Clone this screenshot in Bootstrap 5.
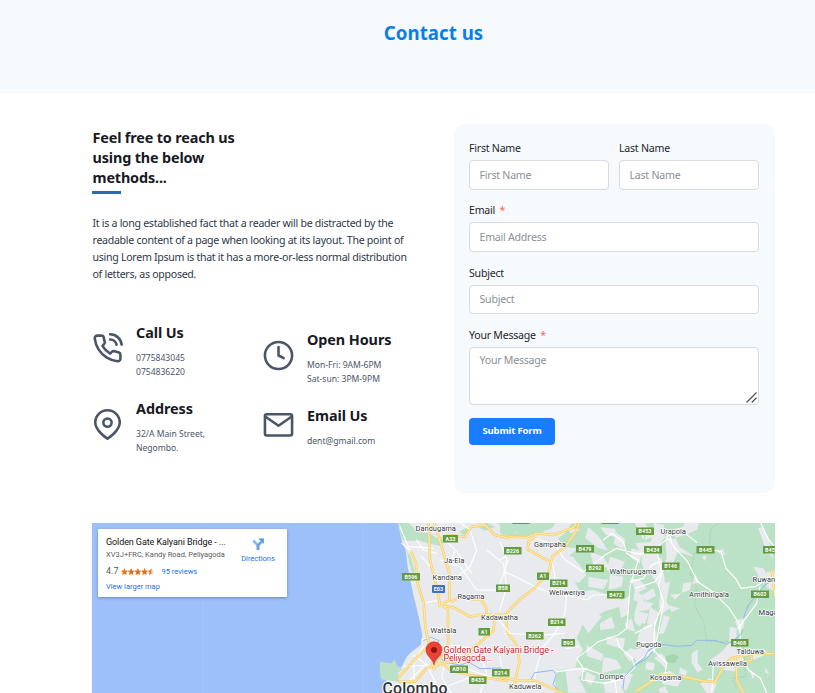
<!DOCTYPE html>
<html lang="en">
<head>
<meta charset="utf-8">
<meta name="viewport" content="width=device-width, initial-scale=1">
<title>Contact us</title>
<link href="https://cdn.jsdelivr.net/npm/bootstrap@5.3.0/dist/css/bootstrap.min.css" rel="stylesheet">
<style>
body{font-family:"Noto Sans","Open Sans",sans-serif;font-size:10.6px;letter-spacing:-.24px;color:#1a202c;overflow:hidden}
.tinted{background:#f7fafd}
.hero{height:94px;padding:20px 40px 0 92px}
.hero h1{font-size:18.7px;line-height:26px;letter-spacing:.02px;color:#087ee8}
.page-area{padding:30px 40px 0 92px}
.info-col{width:342px}
.form-col{width:321px;height:369px;border-radius:10px;padding:16px 16px 0 15px}
h2,h3{font-size:14.4px;font-weight:700;letter-spacing:-.08px;color:#171923}
.lead-title{line-height:20px;width:150px;margin-top:4px;letter-spacing:-.15px;padding-left:.5px}
.accent-line{width:29px;height:3px;background:#2b6cb0;margin-top:3px}
.intro{line-height:17px;width:330px;margin-top:21px;color:#2d3748;letter-spacing:-.285px;padding-left:.5px}
.methods{margin-top:40px}
.method-col{width:171px;flex:none}
.method-col.hours{padding-top:7px}
.method{gap:13px;height:76px}
.method svg{width:31px;height:31px;flex:none;stroke:#4a5568;fill:none;stroke-linecap:round;stroke-linejoin:round;stroke-width:2;margin-top:10px}
.method .mail{margin-top:3px}
.method h3{line-height:20px;margin:0 0 8px}
.method p{font-size:8.6px;line-height:14px;letter-spacing:-.02px;color:#4a5568}
.form-label{line-height:17px;margin-bottom:3px;display:block;color:#212529}
.form-label i{color:#f56565;font-style:normal;margin-left:2px}
.form-control{font:inherit;letter-spacing:inherit;height:29.5px;padding:0 9.5px;border:1px solid #d8dbdf;border-radius:4px}
.form-control::placeholder{color:#8a9097}
.name-row{gap:10px}
.field{margin-bottom:12.8px}
textarea.form-control{height:58px;padding-top:5px;resize:none}
.grip{position:absolute;right:2px;bottom:2px;width:11px;height:11px}
.send{width:86px;height:27px;font-size:9.5px;font-weight:700;letter-spacing:-.16px;background:#1a7dff;border:0;border-radius:4px;color:#fff;padding:0}
.map-box{height:170px;margin-top:30px;overflow:hidden;background:#9cc0f9}
.map-box>svg{display:block}
.place-card{position:absolute;left:6px;top:6px;width:189px;height:68px;background:#fff;border-radius:1px;box-shadow:0 1px 3px rgba(0,0,0,.3);font-family:Roboto,sans-serif;padding:7px 11px 0 8px;letter-spacing:0;font-size:7.5px;color:#5b5b5b}
.place-card a{color:#1a73e8;text-decoration:none}
.place-name{font-size:9px;line-height:12px;color:#111;letter-spacing:-.09px}
.place-addr{line-height:12px;letter-spacing:0;margin-top:1px}
.place-rate{line-height:13px;margin-top:4px}
.place-rate b{font-weight:400;font-size:9px;margin-right:2px}
.place-rate a{margin-left:7px}
.place-more{line-height:12px;margin-top:3px}
.dir{line-height:9px;width:36px;margin-top:2px}
.lbl{font-family:Roboto,sans-serif;font-size:7.6px;fill:#303438;stroke:#fff;stroke-width:1.4px;paint-order:stroke;stroke-linejoin:round;letter-spacing:0}
.shield rect{fill:#649c3f}
.shield text{font:700 5.4px Roboto,sans-serif;fill:#fff;text-anchor:middle;letter-spacing:.1px}
.minor{fill:none;stroke:#fff;stroke-width:3.4;stroke-linejoin:round;stroke-linecap:round}
.edge{fill:none;stroke:#f6c95e;stroke-width:7.5;stroke-linejoin:round}
.core{fill:none;stroke:#ffe9a0;stroke-width:4;stroke-linejoin:round}
.river{fill:none;stroke:#91b8f2;stroke-width:3;stroke-linejoin:round}
.veg{fill:#bbe2c6}
.town{fill:#e8eaed}
</style>
</head>
<body>
<header class="hero tinted text-center"><h1 class="fw-bold mb-0">Contact us</h1></header>
<main class="page-area">
  <div class="d-flex justify-content-between">
    <section class="info-col">
      <h2 class="lead-title mb-0 text-nowrap">Feel free to reach us<br>using the below<br>methods...</h2>
      <div class="accent-line"></div>
      <p class="intro mb-0 text-nowrap">It is a long established fact that a reader will be distracted by the<br>readable content of a page when looking at its layout. The point of<br>using Lorem Ipsum is that it has a more-or-less normal distribution<br>of letters, as opposed.</p>
      <div class="methods d-flex">
        <div class="method-col">
          <div class="method d-flex">
            <svg viewBox="0 0 24 24"><path d="M22 16.92v3a2 2 0 0 1-2.18 2 19.79 19.79 0 0 1-8.63-3.07 19.5 19.5 0 0 1-6-6A19.79 19.79 0 0 1 2.12 4.18 2 2 0 0 1 4.11 2h3a2 2 0 0 1 2 1.72c.13.96.36 1.9.7 2.81a2 2 0 0 1-.45 2.11L8.09 9.91a16 16 0 0 0 6 6l1.27-1.27a2 2 0 0 1 2.11-.45c.91.34 1.85.57 2.81.7A2 2 0 0 1 22 16.92z"/><path d="M14.05 1a9 9 0 0 1 8.9 8M14.05 5A5 5 0 0 1 19 9"/></svg>
            <div><h3>Call Us</h3><p class="mb-0">0775843045<br>0754836220</p></div>
          </div>
          <div class="method d-flex">
            <svg viewBox="0 0 24 24"><path d="M21.500 10.500c0 6.500-9.500 12.500-9.500 12.500s-9.500-6-9.500-12.500a9.500 9.500 0 0 1 19 0z"/><circle cx="12" cy="10.500" r="3.200"/></svg>
            <div><h3>Address</h3><p class="mb-0">32/A Main Street,<br>Negombo.</p></div>
          </div>
        </div>
        <div class="method-col hours">
          <div class="method d-flex">
            <svg viewBox="0 0 24 24"><circle cx="12" cy="12" r="10.500"/><path d="M12 5.500V12l4 2"/></svg>
            <div><h3>Open Hours</h3><p class="mb-0">Mon-Fri: 9AM-6PM<br>Sat-sun: 3PM-9PM</p></div>
          </div>
          <div class="method d-flex">
            <svg class="mail" viewBox="0 0 24 24"><rect x="1.500" y="4" width="21" height="16.500" rx="1.500"/><path d="M22 6l-10 7L2 6"/></svg>
            <div><h3>Email Us</h3><p class="mb-0">dent@gmail.com</p></div>
          </div>
        </div>
      </div>
    </section>
    <form class="form-col tinted">
      <div class="d-flex field name-row">
        <div class="flex-fill"><label class="form-label" for="fn">First Name</label><input class="form-control" id="fn" placeholder="First Name"></div>
        <div class="flex-fill"><label class="form-label" for="ln">Last Name</label><input class="form-control" id="ln" placeholder="Last Name"></div>
      </div>
      <div class="field"><label class="form-label" for="em">Email <i>*</i></label><input class="form-control" id="em" placeholder="Email Address"></div>
      <div class="field"><label class="form-label" for="su">Subject</label><input class="form-control" id="su" placeholder="Subject"></div>
      <div class="field position-relative"><label class="form-label" for="ms">Your Message <i>*</i></label><textarea class="form-control d-block" id="ms" placeholder="Your Message"></textarea>
        <svg class="grip" viewBox="0 0 11 11" stroke="#555" stroke-width="1.300"><path d="M.5 10.500l10-10M5.700 10.500l4.800-4.800"/></svg></div>
      <button class="btn send" type="button">Submit Form</button>
    </form>
  </div>
  <div class="map-box position-relative">
    <svg width="683" height="170" viewBox="92 523 683 170">
      <path d="M203.500 523v170M363.500 523v170" stroke="#a9c7f7" stroke-width=".6"/>
      <g transform="translate(370 520) scale(.33333)">
        <path class="town" d="M82 0L95 62 107 90 113 140 127 210 146 290 157 345 152 375 125 395 110 410 97 437 88 450 60 462 40 500 36 525H1300V0z"/>
        <path class="veg" d="M82 0L96 58 104 62 150 62 175 70 210 78 226 62 222 48 200 55 180 40 140 35 110 0zM110 90L118 130 130 170 133 150 122 110z"/>
        <path class="veg" d="M30 425l35 5 8-12 10 20 15 8-14 14 4 26-55-8-4-25zM270 35l20-14 10 12-18 14zM320 20l30-12 25 12-30 12zM375 0h45v18l-25 4z"/>
        <path class="veg" d="M395 30l50 8 50-20 25 10-5 14-70 10-50-8z"/>
      </g>
      <g transform="translate(500 520) scale(.33333)">
        <path class="veg" d="M0 0h175l-20 25-60 22-50-12L0 40zM238 0h620v525H170l-5-45 10-30 50-5 10-35 15-20-20-35 20-45 30 10 15-35 40-25 5-30-60-20-40 5-20-40-20-40 10-30 25-20-50-5-10-25 20-15 20-30 18 4z"/>
        <path class="town" d="M20 0l50 12 40-14zM200 20l42 10-30 10zM300 22l45 4 5 26-32-8zM265 22l30 25 30 45-30-8-40-30zM160 105l60 5 20 30-20 30-50-10zM205 135l30-5 25 35-25 25-30-20zM270 95l40 15 20 35-50-10zM345 35l30 22-5 30-28-15zM330 110l45 15-20 40-35-15zM265 170l60 10-15 28-45-8zM330 165l40 5-5 30-40 10zM290 225l70 8 10 24-65 20-35-15zM355 245l35-18-5 55-22 12zM240 300l40-30 25 20-40 50zM300 310l35-20 10 35-45 5zM320 350l55 5-5 33-50-15zM375 310l20-15 10 40-25-8zM260 375l50 28-5 20-45-15zM195 440l70 5-30 28 25 45h-55zM260 455l28 15-15 25-20-15zM310 410l40 10 15 25-60 15zM370 400l25-17 20 22-25 20zM365 460l34 3-20 50-30-25zM310 485l40-4 25 40-60-4z"/>
        <path class="town" d="M400 0l35 7 20 42-35-5zM440 20l20 30-25 10zM395 85l30 8-5 38-30-20zM425 130l30-5 10 20-30 15zM390 175l30 5 20 25-30 15zM425 225l35-20 8 22-30 17zM405 270l40 12-10 29-33-8zM450 260l28 20-12 40-25-10zM420 330l35 10-5 45-40-15zM390 390l52-8 10 23-42 20zM440 425l25 5-5 22-25-4z"/>
      </g>
      <g transform="translate(635 520) scale(.33333)">
        <path class="town" d="M0 70l48-5 10-55 30 5-5 30 30 12 45-14 30-15 5-25h-40l-10 18-40 10-18 28-20 25 5 45-35-5zM90 50l28-5 15 35 45 30-50-15-10 25-18 35-15-8 10-35zM20 105l25 5-5 25-20-5zM55 110l25 5 10 70-15 25-28-50zM80 190l25-5-10 60 10 20-28 20-5-35zM145 190l25-5-5 24-25 10zM105 225l35-5-20 18zM180 160l12 26-20 8zM200 110l15-3-5 16zM245 92l20-4 5 18-15-4zM100 255l35 10-25 12zM0 205l28 30-5 15-28-10zM10 240l45 10-15 20-40 5zM0 275l30 15-15 30-15-12zM25 320l25-10 15 30-5 60-20-15-14-40zM85 285l20 6-18 48-15 3zM170 400l18-12v40l15 20-15 10-18-30zM78 400l-20 15 35 30 8-25zM75 460l30-7 35 25-12 22-45-8zM135 442l22 12-5 14-20-8zM300 303l26-10v28l-15 14zM285 320l20 5-2 65 20 20-18 45-40-5-40-30 35-25 22-25zM340 400l45-14 15 14-45 20zM345 455l15 5-5 18zM390 440l15 25-15-8zM380 20l20 30 15 65-20-20-25-70zM355 140l30 5 15 25-25 5zM395 155h25v60l-25-15zM195 490l30-15 20 15-10 30h-20zM0 395l45-30 5 15-50 40zM70 508l20-10 10 20H75z"/>
        <path d="M90 410l25-8 18 8-15 20-22-3z" fill="#a5d6b2"/>
      </g>
      <g transform="translate(500 520) scale(.33333)">
        <path class="minor" d="M0 65l20 50-5 40 40 20 50 25 45 18 20-10 40 20 50 12 20-15 90-2M25 118L0 190M155 120l10 50-10 40M200 220l-5 60-30 60-35 40-20 60-8 55M105 55l60 20 30 45 55 35 35-25 30-25 35-20 75 20M310 60l25-20 35 25 10 35 35 20-25 80-5 70-5 55-25 20-60 20-25 20-40 30 20 30-5 35 70 10 50-12 40-35-10-30-35-30-10-25M170 455l80-10 45 15 50 25 5 35M390 185l40-10 25-40 25-10M0 120l15-10M15 340l115 5 65-5M200 385l35-5M0 410l10 60M415 20l15 35"/>
        <path class="river" d="M92 480l12-22 55-7 10 12-10 30 22 25M369 505l4-35 35-36 30-16 25-30"/>
        <path class="edge" d="M240 0L228 35 196 80 158 108 152 132 145 160 104 204 60 238 22 277 7 300M0 50l80 2 30-12 50 5 60-22 15-23M105 50l-18 12-4 26 42 24 28 14M18 277l4 60 28 38 8 50-12 55-10 30M0 470l45 10 58 2 30 12 65 31"/>
        <path class="core" d="M240 0L228 35 196 80 158 108 152 132 145 160 104 204 60 238 22 277 7 300M0 50l80 2 30-12 50 5 60-22 15-23M105 50l-18 12-4 26 42 24 28 14M18 277l4 60 28 38 8 50-12 55-10 30M0 470l45 10 58 2 30 12 65 31"/>
      </g>
      <g transform="translate(635 520) scale(.33333)">
        <path d="M255 9l-27 16-5 55-45 20-12 60 20 45-8 50 28 50 10 60 80 0 30 15 5 90-40 5 15 30" fill="none" stroke="#91a699" stroke-width="2.500" stroke-dasharray="2 5"/>
        <path class="minor" d="M60 85l40-30 20 30 38 40 30 60 45 30 50 50 32 50 1 90 25 45 35 25 20 45M65 90l15 70-10 35 15 50-25 65-5 80 40 40-5 30M0 100l30 0 30-15M110 65l-8-30M95 50l45-18 45 35M220 87l38 8 15 50 30 32 15 28 45-6 25-15M378 10l20 45 20 25M310 325l55-75 10-50M235 435l-5 90M0 340l50-25M0 430l60-45 25-130M0 205l60-20 30-45"/>
        <path class="river" d="M0 435l28-22 14-24 38-16 45 6 45-3 15-15 55 0 35 12 20-12 15-10 15-20M325 295l15-40 50-60 25-15"/>
        <path class="edge" d="M0 515l30-18 50-32 65 5 55 12 40 5 24-45 24-27 15-4 55-10 60 0M302 412l4 70 22 43M323 425l25-3 4-18M410 150l10 80"/>
        <path class="core" d="M0 515l30-18 50-32 65 5 55 12 40 5 24-45 24-27 15-4 55-10 60 0M302 412l4 70 22 43M323 425l25-3 4-18M410 150l10 80"/>
      </g>
      <g transform="translate(370 520) scale(.33333)">
        <path class="minor" d="M90 20l25 60 75 5M140 60l20 30 40 10M155 110l25 30M95 70l25 20M260 0l40 30 20 60-20 50-50 40M350 90l50 40 10 70-20 70M210 120l60 20 50 70 70 0M155 250l45-8M225 60l30 30-10 30M260 95l45 65M155 360l20-8 30 10 20 60-10 50 30 50M130 405l40 30 30 60M100 440l80-5M120 480l50-50M110 500l80 10M270 440l90 30 60-5M330 400l20 60-20 60M370 280l50 60M240 375l70 10M160 380l-30 50 5 70M215 505l80-30"/>
        <path class="river" d="M160 362l22-10 25 10-5 30 18 32 50 12 25-10 35 20 65-2"/>
        <path class="edge" d="M123 95l15 35 5 60 18 60 5 70 12 60 14 70M175 0l5 120 22 90 8 45 24 12 0 110-25 45-20 28M190 0l28 90 20 70 0 80-20 12M205 256l45 6 50 28 25-5 95-1M243 245l30-14 25 5 35 5 15 20 2 20M375 284l-5 50-60 50-40 38-75 12M85 485l50 0 35-40 40-18 35 25 60 14 110 18M180 375l-40 38-55 60M205 60l30-15 50 5 20-30 40-5 30 30 45 10"/>
        <path class="core" d="M123 95l15 35 5 60 18 60 5 70 12 60 14 70M175 0l5 120 22 90 8 45 24 12 0 110-25 45-20 28M190 0l28 90 20 70 0 80-20 12M205 256l45 6 50 28 25-5 95-1M243 245l30-14 25 5 35 5 15 20 2 20M375 284l-5 50-60 50-40 38-75 12M85 485l50 0 35-40 40-18 35 25 60 14 110 18M180 375l-40 38-55 60M205 60l30-15 50 5 20-30 40-5 30 30 45 10"/>
      </g>
      <g class="shield">
        <rect x="443" y="535" width="15" height="7.500"/><text x="450.500" y="540.600">A33</text>
        <rect x="402" y="573" width="18" height="7.500"/><text x="411" y="578.600">B596</text>
        <rect x="432" y="585" width="13" height="8" rx="1" style="fill:#3c6fc4"/><text x="438.500" y="591">E03</text>
        <rect x="504" y="547" width="17.500" height="7.500"/><text x="512.700" y="552.600">B226</text>
        <rect x="576" y="545" width="18" height="7.500"/><text x="585" y="550.600">B479</text>
        <rect x="586" y="564.500" width="18" height="7.500"/><text x="595" y="570.200">B292</text>
        <rect x="537" y="572.500" width="12" height="7.500"/><text x="543" y="578.200">A1</text>
        <rect x="550" y="579.500" width="17.500" height="7.500"/><text x="558.700" y="585.200">B214</text>
        <rect x="496" y="584.500" width="14" height="7.500"/><text x="503" y="590.200">B58</text>
        <rect x="607" y="591" width="17.500" height="7.500"/><text x="615.700" y="596.700">B472</text>
        <rect x="548" y="618.500" width="17.500" height="7.500"/><text x="556.700" y="624.200">B214</text>
        <rect x="478.500" y="628" width="11.500" height="7.500"/><text x="484.200" y="633.700">A1</text>
        <rect x="526" y="632" width="17.500" height="7.500"/><text x="534.700" y="637.700">B262</text>
        <rect x="561.500" y="639" width="13.500" height="7.500"/><text x="568.200" y="644.700">B95</text>
        <rect x="450" y="665.500" width="18" height="7.500"/><text x="459" y="671.200">AB10</text>
        <rect x="492" y="669" width="17.500" height="7.500"/><text x="500.700" y="674.700">B214</text>
        <rect x="469" y="676.500" width="17.500" height="7.500"/><text x="477.700" y="682.200">B435</text>
        <rect x="636" y="527.500" width="18" height="7.500"/><text x="645" y="533.200">B453</text>
        <rect x="644" y="546" width="18" height="7.500"/><text x="653" y="551.700">B434</text>
        <rect x="662" y="562.500" width="17.500" height="7.500"/><text x="670.700" y="568.200">B146</text>
        <rect x="696.500" y="546" width="18" height="7.500"/><text x="705.500" y="551.700">B445</text>
        <rect x="763" y="546" width="18" height="7.500"/><text x="771.500" y="551.700">B457</text>
        <rect x="751" y="590.500" width="18" height="7.500"/><text x="760" y="596.200">B603</text>
        <rect x="731" y="639" width="17.500" height="7.500"/><text x="739.700" y="644.700">B408</text>
        <rect x="512.500" y="519" width="17" height="5"/><rect x="601.500" y="519" width="17" height="5"/>
      </g>
      <g class="lbl">
        <text x="415.500" y="530.600" textLength="40.500">Dandugama</text>
        <text x="444" y="562.700" textLength="20.500">Ja-Ela</text>
        <text x="432.500" y="580.200" textLength="29.500">Kandana</text>
        <text x="457.500" y="598.500" textLength="27">Ragama</text>
        <text x="481" y="619.700" textLength="37">Kadawatha</text>
        <text x="430.500" y="632.700" textLength="26">Wattala</text>
        <text x="534" y="547.200" textLength="32">Gampaha</text>
        <text x="549" y="594.700" textLength="36">Weliweriya</text>
        <text x="609.500" y="574.200" textLength="47">Wathurugama</text>
        <text x="660.500" y="534.200" textLength="25.500">Urapola</text>
        <text x="752.500" y="582" textLength="40">Ruwanwella</text>
        <text x="689" y="596.700" textLength="40">Amithirigala</text>
        <text x="758.500" y="614.500">Magammana</text>
        <text x="636" y="647.200" textLength="25.500">Pugoda</text>
        <text x="736.500" y="654.200" textLength="27.500">Talduwa</text>
        <text x="708" y="666" textLength="39">Avissawella</text>
        <text x="599.500" y="679.200" textLength="24">Dompe</text>
        <text x="650" y="680" textLength="31.500">Kosgama</text>
        <text x="509" y="689.200" textLength="32.500">Kaduwela</text>
        <text x="382.500" y="693.500" textLength="65" style="font-size:15.800px;stroke-width:2px;font-weight:500">Colombo</text>
        <g style="font-size:9px;fill:#c5221f"><text x="443.500" y="652.500" textLength="110">Golden Gate Kalyani Bridge -</text><text x="443.500" y="661" textLength="48.500">Peliyagoda...</text></g>
      </g>
      <path d="M434 665c-.6-6-8-8.500-8-15.300a8 8 0 0 1 16 0c0 6.800-7.400 9.300-8 15.300z" fill="#ea4335" stroke="#c5221f" stroke-width=".5"/><circle cx="434" cy="650" r="3" fill="#a50e0e"/>
    </svg>
    <div class="place-card d-flex justify-content-between text-nowrap">
      <div>
        <div class="place-name">Golden Gate Kalyani Bridge - ...</div>
        <div class="place-addr">XV3J+FRC, Kandy Road, Peliyagoda</div>
        <div class="place-rate d-flex align-items-center"><b>4.7</b>
          <svg width="34" height="8" viewBox="0 0 34 8" fill="#e7711b"><defs><path id="st" d="M3.500 0l1.050 2.500 2.550.2-1.900 1.750.55 2.750L3.500 5.800 1.250 7.200 1.800 4.450-.1 2.700l2.550-.2z"/></defs><use href="#st"/><use href="#st" x="6.700"/><use href="#st" x="13.400"/><use href="#st" x="20.100"/><use href="#st" x="26.800" fill="#ddd"/><path d="M30.300 0v5.800l-2.250 1.400.55-2.750-1.900-1.750 2.550-.2z"/></svg>
          <a href="#">95 reviews</a></div>
        <div class="place-more"><a href="#">View larger map</a></div>
      </div>
      <div class="dir text-center"><svg class="d-block mx-auto mb-1" width="12" height="12" viewBox="0 0 12 12" fill="none" stroke="#65a1ea" stroke-width="2.600"><path d="M6 12V7.500L1.200 2.500" stroke="#8bb9f1"/><path d="M6 12V7.500L9.300 3.800"/><path d="M6.300.5H11.800V6z" fill="#5194e8" stroke="none"/></svg><a href="#">Directions</a></div>
    </div>
  </div>
</main>
<script src="https://cdn.jsdelivr.net/npm/bootstrap@5.3.0/dist/js/bootstrap.bundle.min.js"></script>
</body>
</html>
